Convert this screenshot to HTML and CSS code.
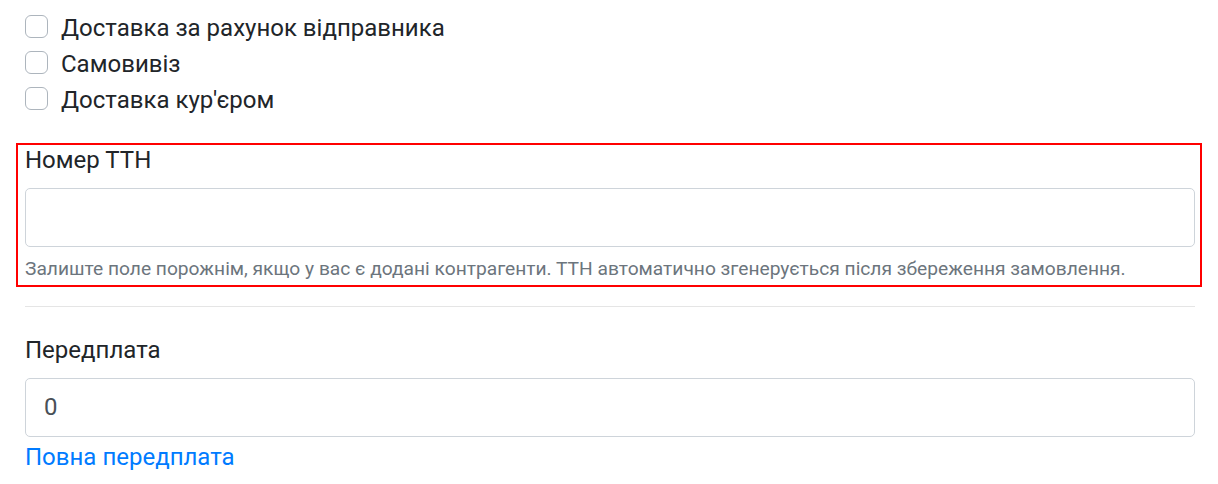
FILE: index.html
```html
<!DOCTYPE html>
<html lang="uk">
<head>
    <meta charset="UTF-8">
    <meta name="viewport" content="width=device-width, initial-scale=1.0">
    <title>Доставка</title>
    <link rel="stylesheet" href="styles.css">
</head>
<body>
    <form class="order-form">
        <div class="check-list">
            <label class="check-row">
                <input type="checkbox" class="check-box">
                <span>Доставка за рахунок відправника</span>
            </label>
            <label class="check-row">
                <input type="checkbox" class="check-box">
                <span>Самовивіз</span>
            </label>
            <label class="check-row">
                <input type="checkbox" class="check-box">
                <span>Доставка кур'єром</span>
            </label>
        </div>

        <div class="form-group highlighted">
            <label for="ttn" class="field-label">Номер ТТН</label>
            <input type="text" id="ttn" class="field-input">
            <small class="field-help">Залиште поле порожнім, якщо у вас є додані контрагенти. ТТН автоматично згенерується після збереження замовлення.</small>
        </div>

        <hr class="divider">

        <div class="form-group">
            <label for="prepay" class="field-label">Передплата</label>
            <input type="text" id="prepay" class="field-input" value="0">
            <a href="#" class="field-link">Повна передплата</a>
        </div>
    </form>
</body>
</html>
```

FILE: styles.css
```css
body {
    margin: 0;
    padding: 10px 23px 0 25px;
    font-family: Roboto, "Liberation Sans", sans-serif;
    font-size: 24px;
    line-height: 1.5;
    color: #212529;
    background: #fff;
}
.check-list {
    display: flex;
    flex-direction: column;
}
.check-row {
    display: flex;
    align-items: flex-start;
    gap: 13px;
    line-height: 36px;
}
.check-box {
    appearance: none;
    -webkit-appearance: none;
    width: 23px;
    height: 23px;
    margin: 5px 0 0;
    border: 1px solid #adb5bd;
    border-radius: 6px;
    background: #fff;
    flex: none;
}
.form-group {
    display: flex;
    flex-direction: column;
}
.highlighted {
    margin: 25px -7px 0 -9px;
    padding: 0 5px 1px 7px;
    border: 2px solid #ff0000;
}
.highlighted .field-label {
    margin-top: -3px;
}
.field-label {
    margin-bottom: 10px;
}
.field-input {
    height: 59px;
    box-sizing: border-box;
    padding: 0 18px;
    border: 1px solid #ced4da;
    border-radius: 5px;
    font-family: inherit;
    font-size: 24px;
    color: #495057;
    background: #fff;
}
.field-help {
    margin-top: 8px;
    font-size: 19.2px;
    color: #6c757d;
}
.divider {
    margin: 19px 0 25px;
    border: 0;
    border-top: 1px solid #e5e5e5;
}
.field-link {
    margin-top: 2px;
    color: #007bff;
    text-decoration: none;
}
```
